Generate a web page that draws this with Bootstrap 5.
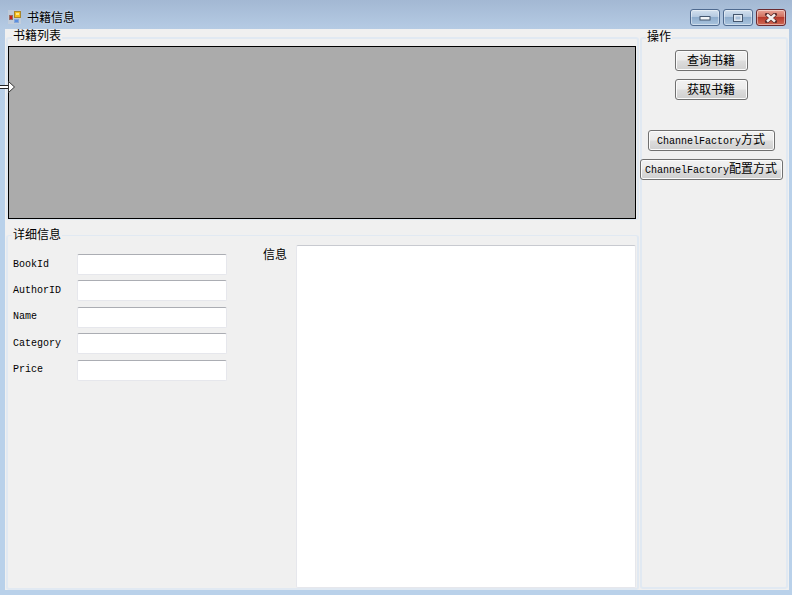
<!DOCTYPE html>
<html lang="zh">
<head>
<meta charset="utf-8">
<title>书籍信息</title>
<link rel="stylesheet" href="https://cdn.jsdelivr.net/npm/bootstrap@5.3.0/dist/css/bootstrap.min.css">
<style>
html,body{margin:0;padding:0;overflow:hidden}
body{width:792px;height:595px;background:#b9d1ea;font-family:"Noto Sans CJK SC","Liberation Sans",sans-serif;font-size:12px;line-height:12px;color:#000}
.win{width:792px;height:595px;position:relative;background:linear-gradient(#a3b8d3 0,#b5cbe4 29px,#b9d1ea 120px);padding-bottom:5px}
.ttl{height:29px;padding:9px 6px 0 8px;color:#000}
.ttl-text{margin-left:6px;margin-top:2px;text-shadow:0 0 3px #e4effa}
.ctl{width:30px;height:17px;border:1px solid #4f6a8f;border-radius:3px;background:linear-gradient(#d3e0ee 0,#b4c9e0 45%,#8fadcd 50%,#a9c4de 100%);box-shadow:inset 0 0 0 1px rgba(255,255,255,.45)}
.ctl-x{border-color:#6b2a30;background:linear-gradient(#e9a497 0,#d0705f 45%,#b73a2c 50%,#cf6a56 100%)}
.ctl-gap{gap:3px}
.client{height:561px;margin:0 3px 0 5px;background:#f0f0f0;padding:8px 1px 1px 1px;gap:1px}
.lft{width:633px}
.grp{border:2px solid #e1e9f2;border-radius:3px;position:relative}
.grp-a{height:184px;padding:7px 0 0 0;border-bottom-width:1px}
.grp-b{flex:1;margin-top:15px;padding:9px 0 0 4px;border-top-width:1px}
.grp-c{width:148px;padding:11px 6px 0 0}
.lgd{position:absolute;left:4px;top:-10px;background:#f0f0f0;padding:0 1px;height:14px}
.grp-b .lgd{top:-8px}
.grp-c .lgd{top:-9px}
.gridbox{width:628px;height:173px;background:#ababab;border:1px solid #000}
.rowarrow{position:absolute;left:0;top:81px;width:16px;height:12px}
.latin{font-family:"Liberation Mono","Noto Sans CJK SC",monospace;font-size:10px;letter-spacing:0}
.fld{height:21px;margin-bottom:5.4px}
.fld-lbl{width:65px;padding-left:1px;color:#000}
.fld-in{width:150px;height:21px;background:#fff;border:1px solid #e6e7ec;border-top-color:#abadb3;border-radius:2px;padding:0}
.fldcol{padding-top:9px;width:220px}
.msg-lbl{width:64px;padding:3px 0 0 31px;flex:none}
.msg{width:340px;height:343px;background:#fff;border:1px solid #e6e7ec;border-top-color:#c8cad0;border-radius:2px;resize:none;padding:0}
.wbtn{height:21px;border:1px solid #707070;border-radius:3px;background:linear-gradient(#f2f2f2 0,#ebebeb 48%,#dddddd 52%,#cfcfcf 100%);box-shadow:inset 0 0 0 1px #fbfbfb;padding:0;font-size:12px;line-height:12px;color:#000;white-space:nowrap}
.w73{width:73px;padding-bottom:2px}.w127{width:127px}.w143{width:143px;flex:none}
.sp8{margin-top:8px}.sp30{margin-top:30px}
</style>
</head>
<body>
<div class="win d-flex flex-column">
  <div class="ttl d-flex align-items-start">
    <svg width="13" height="15" viewBox="0 0 13 15">
      <rect x="0" y="1" width="13" height="14" fill="#cfd3d8" opacity=".55"/>
      <rect x="1.5" y="6.5" width="3" height="4" fill="#c8201c" stroke="#9a6a60"/>
      <rect x="6.5" y="2.5" width="6" height="6" fill="#f5bf1c" stroke="#a8862e"/>
      <rect x="8" y="4" width="3" height="2" fill="#fde98a"/>
      <rect x="6.5" y="10.5" width="4" height="3" fill="#5b8fe0" stroke="#88a8d8"/>
    </svg>
    <span class="ttl-text">书籍信息</span>
    <div class="ms-auto d-flex ctl-gap">
      <div class="ctl d-flex align-items-center justify-content-center"><svg width="12" height="6"><rect x="1" y="1.5" width="10" height="3.5" fill="#f2f5f8" stroke="#44566e"/></svg></div>
      <div class="ctl d-flex align-items-center justify-content-center"><svg width="12" height="10"><rect x="1.5" y="1.5" width="9" height="7" fill="#dfe7f0" stroke="#44566e"/><rect x="3.5" y="3.5" width="5" height="3" fill="#a9c0da"/></svg></div>
      <div class="ctl ctl-x d-flex align-items-center justify-content-center"><svg width="14" height="10"><path d="M3 1.5 L11 8.5 M11 1.5 L3 8.5" stroke="#5a2a2a" stroke-width="4" stroke-linecap="round"/><path d="M3 1.5 L11 8.5 M11 1.5 L3 8.5" stroke="#f4f0ef" stroke-width="2.4" stroke-linecap="butt"/></svg></div>
    </div>
  </div>
  <div class="client d-flex">
    <div class="lft d-flex flex-column">
      <div class="grp grp-a">
        <span class="lgd">书籍列表</span>
        <div class="gridbox"></div>
      </div>
      <div class="grp grp-b d-flex">
        <span class="lgd">详细信息</span>
        <div class="fldcol">
          <div class="fld d-flex align-items-center"><span class="fld-lbl latin">BookId</span><input class="fld-in" type="text" aria-label="BookId"></div>
          <div class="fld d-flex align-items-center"><span class="fld-lbl latin">AuthorID</span><input class="fld-in" type="text" aria-label="AuthorID"></div>
          <div class="fld d-flex align-items-center"><span class="fld-lbl latin">Name</span><input class="fld-in" type="text" aria-label="Name"></div>
          <div class="fld d-flex align-items-center"><span class="fld-lbl latin">Category</span><input class="fld-in" type="text" aria-label="Category"></div>
          <div class="fld d-flex align-items-center"><span class="fld-lbl latin">Price</span><input class="fld-in" type="text" aria-label="Price"></div>
        </div>
        <span class="msg-lbl">信息</span>
        <textarea class="msg" aria-label="信息"></textarea>
      </div>
    </div>
    <div class="grp grp-c d-flex flex-column align-items-center">
      <span class="lgd">操作</span>
      <button class="wbtn w73" type="button">查询书籍</button>
      <button class="wbtn w73 sp8" type="button">获取书籍</button>
      <button class="wbtn w127 sp30" type="button"><span class="latin">ChannelFactory</span>方式</button>
      <button class="wbtn w143 sp8" type="button"><span class="latin">ChannelFactory</span>配置方式</button>
    </div>
  </div>
  <svg class="rowarrow" viewBox="0 0 16 12">
    <path d="M0 4.5H9 M0 7.5H9" stroke="#222" stroke-width="1"/>
    <path d="M0 5H9V7H0Z" fill="#fff"/>
    <path d="M8.5 0.5 L14.5 6 L8.5 11.5 Z" fill="#fff" stroke="#333" stroke-width="1"/>
  </svg>
</div>
</body>
</html>
